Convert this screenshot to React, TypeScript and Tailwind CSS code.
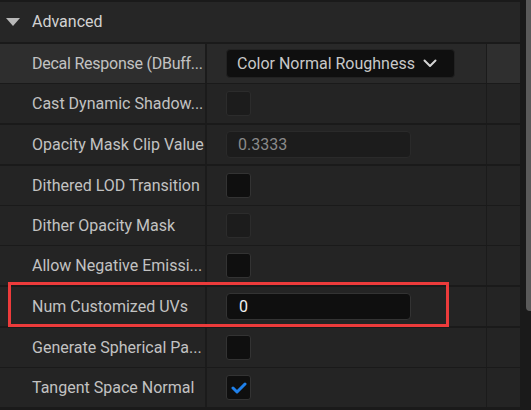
import React from "react";

type Row = {
  label: string;
  kind: "dropdown" | "check" | "checkOff" | "input" | "inputOff";
  value?: string;
  checked?: boolean;
  sep: number;
  hover?: boolean;
  tight?: boolean;
};

const rows: Row[] = [
  { label: "Decal Response (DBuff...", kind: "dropdown", value: "Color Normal Roughness", sep: 1, hover: true, tight: true },
  { label: "Cast Dynamic Shadow...", kind: "checkOff", sep: 2 },
  { label: "Opacity Mask Clip Value", kind: "inputOff", value: "0.3333", sep: 2 },
  { label: "Dithered LOD Transition", kind: "check", sep: 1 },
  { label: "Dither Opacity Mask", kind: "checkOff", sep: 1 },
  { label: "Allow Negative Emissi...", kind: "check", sep: 2 },
  { label: "Num Customized UVs", kind: "input", value: "0", sep: 2 },
  { label: "Generate Spherical Pa...", kind: "check", sep: 1 },
  { label: "Tangent Space Normal", kind: "check", checked: true, sep: 2 },
];

function Chevron() {
  return (
    <svg width="14" height="9" viewBox="0 0 14 9" className="ml-[8px]">
      <path d="M1.5 1.5 L7 7 L12.5 1.5" fill="none" stroke="#d4d4d4" strokeWidth="2" strokeLinecap="round" strokeLinejoin="round" />
    </svg>
  );
}

function Value({ row }: { row: Row }) {
  if (row.kind === "dropdown") {
    return (
      <div className="flex items-center h-[29px] w-[229px] rounded-[4px] bg-[#0f0f0f] border border-[#222] pl-[10px]">
        <span className="text-[16px] text-[#c8c8c8]">{row.value}</span>
        <Chevron />
      </div>
    );
  }
  if (row.kind === "input" || row.kind === "inputOff") {
    const off = row.kind === "inputOff";
    return (
      <div
        className={
          off
            ? "flex items-center h-[27px] w-[185px] rounded-[4px] bg-[#1c1c1c] border border-[#2a2a2a] pl-[11px] text-[16px] text-[#8a8a8a]"
            : "flex items-center h-[27px] w-[185px] rounded-[4px] bg-[#0f0f0f] border border-[#333] pl-[12px] text-[16px] text-[#f0f0f0]"
        }
      >
        {row.value}
      </div>
    );
  }
  const off = row.kind === "checkOff";
  return (
    <div
      className={
        off
          ? "flex items-center justify-center w-[25px] h-[25px] rounded-[3px] bg-[#1c1c1c] border border-[#2c2c2c]"
          : "flex items-center justify-center w-[25px] h-[25px] rounded-[3px] bg-[#0f0f0f] border border-[#333]"
      }
    >
      {row.checked && (
        <svg width="16" height="12" viewBox="0 0 16 12">
          <path d="M2 6 L6 10 L14 2" fill="none" stroke="#1f80ea" strokeWidth="3" strokeLinecap="round" strokeLinejoin="round" />
        </svg>
      )}
    </div>
  );
}

export default function App() {
  return (
    <div className="relative flex w-[531px] h-[410px] overflow-hidden bg-[#1a1a1a]" style={{ fontFamily: "Roboto, 'Noto Sans', sans-serif" }}>
      <div className="flex flex-col w-[520px]">
        {/* top edge of the previous row */}
        <div className="h-[2px] bg-[#1a1a1a]" />
        <div className="flex items-center h-[40px] bg-[#262626]">
          <svg width="14" height="8" viewBox="0 0 14 8" className="ml-[6px]">
            <path d="M0 0 L14 0 L7 8 Z" fill="#b8b8b8" />
          </svg>
          <span className="ml-[12px] text-[16px] text-[#d2d2d2]">Advanced</span>
        </div>
        <div className="h-[2px] bg-[#1a1a1a]" />
        {rows.map((row) => (
          <div key={row.label} className="flex flex-col">
            <div className="flex h-[39px]">
              <div className={`flex items-center w-[205px] pl-[32px] ${row.hover ? "bg-[#2e2e2e]" : "bg-[#242424]"}`}>
                <span className={`text-[16px] text-[#c2c2c2] whitespace-nowrap ${row.tight ? "tracking-[-0.25px]" : ""}`}>{row.label}</span>
              </div>
              <div className="w-[2px] bg-[#1b1b1b]" />
              <div className={`flex items-center w-[279px] pl-[19px] ${row.hover ? "bg-[#292929]" : "bg-[#242424]"}`}>
                <Value row={row} />
              </div>
              <div className="w-px bg-[#1b1b1b]" />
              <div className={`flex-1 ${row.hover ? "bg-[#2f2f2f]" : "bg-[#242424]"}`} />
            </div>
            <div className={row.sep === 2 ? "h-[2px] bg-[#1a1a1a]" : "h-px bg-[#1a1a1a]"} />
          </div>
        ))}
      </div>
      <div className="flex-1 flex justify-end bg-[#1a1a1a]">
        <div className="w-[5px] h-[311px] bg-[#5a5a5a] rounded-bl-[4px]" />
      </div>
      {/* highlight annotation */}
      <div className="absolute left-[8px] top-[282px] w-[441px] h-[45px] border-[3px] border-[#ec3b3b] pointer-events-none" />
    </div>
  );
}
